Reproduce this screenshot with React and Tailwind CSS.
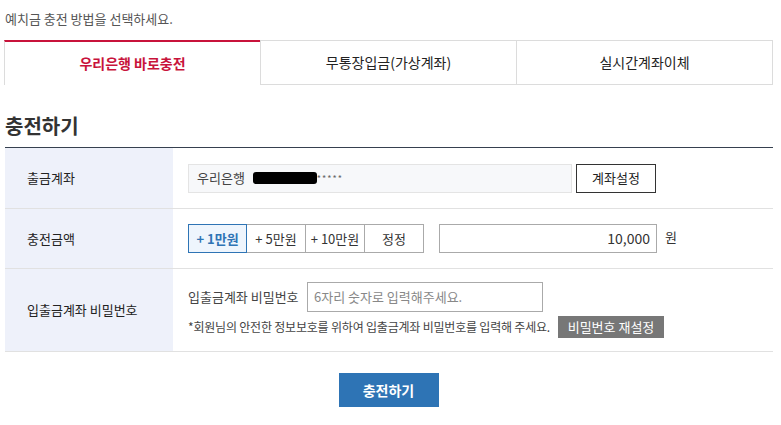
import React from "react";

const font = { fontFamily: '"Noto Sans CJK KR", "Noto Sans", sans-serif' };

function Tabs() {
  return (
    <div className="flex h-[45px] mt-[13px]">
      <div className="flex-1 flex items-center justify-center border-t-2 border-l border-[#c8133b] border-l-[#dcdcdc] text-[#c8133b] text-[14px] font-bold">
        우리은행 바로충전
      </div>
      <div className="flex-1 flex items-center justify-center border border-[#dcdcdc] text-[#222] text-[14px]">
        무통장입금(가상계좌)
      </div>
      <div className="flex-1 flex items-center justify-center border border-l-0 border-[#dcdcdc] text-[#222] text-[14px]">
        실시간계좌이체
      </div>
    </div>
  );
}

function Row({ label, children, height }) {
  return (
    <div className={`flex border-b border-[#e1e1e1] ${height}`}>
      <div className="w-[168px] shrink-0 bg-[#eef1fa] flex items-center pl-[22px] text-[13px] text-[#222]">
        {label}
      </div>
      <div className="flex-1 pl-[15px] flex flex-col justify-center">{children}</div>
    </div>
  );
}

export default function App() {
  return (
    <div className="w-[781px] h-[425px] bg-white text-[#333]" style={font}>
      <div className="ml-[4px] w-[769px]">
        <p className="pt-[10px] pl-[1px] text-[13px] leading-[17px] text-[#555]">
          예치금 충전 방법을 선택하세요.
        </p>
        <Tabs />
        <h2 className="mt-[28px] pl-[1px] text-[20px] leading-[26px] font-bold text-[#333]">
          충전하기
        </h2>
        <div className="mt-[8px] ml-[1px] border-t border-[#36404f]">
          <Row label="출금계좌" height="h-[61px]">
            <div className="flex items-center gap-[4px]">
              <div className="w-[384px] h-[29px] bg-[#f7f8fa] border border-[#e4e4e4] flex items-center pl-[8px] text-[13px] text-[#444]">
                <span>우리은행</span>
                <span className="ml-[8px] inline-block w-[64px] h-[12px] bg-black rounded-[3px]" />
                <span className="text-[9px] text-[#666] leading-none tracking-[1px]">*****</span>
              </div>
              <button className="w-[80px] h-[29px] border border-[#333] bg-white text-[13px] text-[#222]">
                계좌설정
              </button>
            </div>
          </Row>
          <Row label="충전금액" height="h-[60px]">
            <div className="flex items-center">
              <div className="flex h-[29px] text-[13px]">
                <button className="w-[59px] border border-[#2e74b5] bg-[#eef5fd] text-[#2e74b5] font-bold">
                  + 1만원
                </button>
                <button className="w-[59px] border border-l-0 border-[#aaa] bg-white text-[#333]">
                  + 5만원
                </button>
                <button className="w-[59px] border border-l-0 border-[#aaa] bg-white text-[#333]">
                  + 10만원
                </button>
                <button className="w-[59px] border border-l-0 border-[#aaa] bg-white text-[#333]">
                  정정
                </button>
              </div>
              <div className="ml-[15px] w-[218px] h-[29px] border border-[#aaa] flex items-center justify-end pr-[6px] text-[14px] text-[#333]">
                10,000
              </div>
              <span className="ml-[8px] text-[13px] text-[#333] -mt-[4px]">원</span>
            </div>
          </Row>
          <Row label="입출금계좌 비밀번호" height="h-[83px]">
            <div className="flex items-center">
              <span className="text-[13px] text-[#444] w-[119px]">입출금계좌 비밀번호</span>
              <div className="w-[236px] h-[30px] border border-[#aaa] flex items-center pl-[6px] text-[13px] text-[#888]">
                6자리 숫자로 입력해주세요.
              </div>
            </div>
            <div className="flex items-center mt-[4px]">
              <span className="text-[12px] text-[#444] tracking-[-0.2px]">
                *회원님의 안전한 정보보호를 위하여 입출금계좌 비밀번호를 입력해 주세요.
              </span>
              <button className="ml-[8px] w-[106px] h-[22px] bg-[#777] text-white text-[13px]">
                비밀번호 재설정
              </button>
            </div>
          </Row>
        </div>
        <div className="flex justify-center mt-[21px]">
          <button className="w-[100px] h-[34px] bg-[#2e74b5] text-white text-[14px] font-bold">
            충전하기
          </button>
        </div>
      </div>
    </div>
  );
}
